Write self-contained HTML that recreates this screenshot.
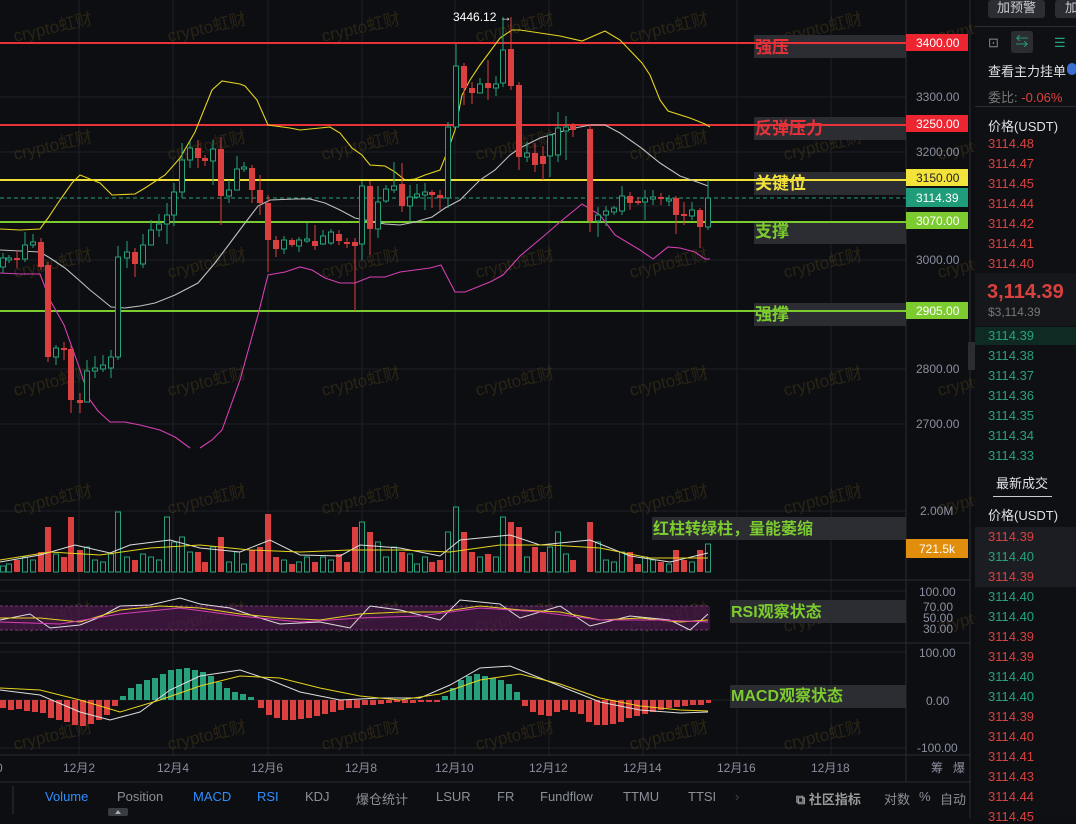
<!DOCTYPE html>
<html><head><meta charset="utf-8"><style>
*{margin:0;padding:0;box-sizing:border-box}
body{width:1076px;height:818px;background:#0d0e11;overflow:hidden;font-family:"Liberation Sans","Noto Sans CJK SC",sans-serif;position:relative;color:#c9ccd2}
.rp{position:absolute;left:975px;top:0;width:101px;height:818px;background:#0f1013}
.rp div{position:absolute;left:13px;font-size:13px;white-space:nowrap}
.r{color:#d9413f}.g{color:#26a17b}
.tb{position:absolute;top:789px;font-size:13px;color:#8a8f98}
.bl{color:#2e8fff}
</style></head><body>
<svg width="1076" height="818" style="position:absolute;left:0;top:0" font-family="Liberation Sans, Noto Sans CJK SC, sans-serif">
<g stroke="#1e2026" stroke-width="1">
<path d="M0,97H906M0,152H906M0,206H906M0,260H906M0,369H906M0,424H906M0,511H906M0,591H906M0,652H906M0,700H906M0,748H906"/>
<path d="M79,0V755M173,0V755M268,0V755M362,0V755M455,0V755M549,0V755M643,0V755M737,0V755M831,0V755"/>
</g>
<g stroke="#2a2c33"><path d="M0,580H970M0,643H970M0,755H970M0,782H970M906,0V782M970,0V818"/></g>
<g fill="#5a4a1c" fill-opacity="0.38" font-size="17">
<text transform="translate(15,42) rotate(-13)">crypto虹财</text><text transform="translate(169,42) rotate(-13)">crypto虹财</text><text transform="translate(323,42) rotate(-13)">crypto虹财</text><text transform="translate(477,42) rotate(-13)">crypto虹财</text><text transform="translate(631,42) rotate(-13)">crypto虹财</text><text transform="translate(785,42) rotate(-13)">crypto虹财</text><text transform="translate(939,42) rotate(-13)">crypto虹财</text>
<text transform="translate(15,160) rotate(-13)">crypto虹财</text><text transform="translate(169,160) rotate(-13)">crypto虹财</text><text transform="translate(323,160) rotate(-13)">crypto虹财</text><text transform="translate(477,160) rotate(-13)">crypto虹财</text><text transform="translate(631,160) rotate(-13)">crypto虹财</text><text transform="translate(785,160) rotate(-13)">crypto虹财</text><text transform="translate(939,160) rotate(-13)">crypto虹财</text>
<text transform="translate(15,278) rotate(-13)">crypto虹财</text><text transform="translate(169,278) rotate(-13)">crypto虹财</text><text transform="translate(323,278) rotate(-13)">crypto虹财</text><text transform="translate(477,278) rotate(-13)">crypto虹财</text><text transform="translate(631,278) rotate(-13)">crypto虹财</text><text transform="translate(785,278) rotate(-13)">crypto虹财</text><text transform="translate(939,278) rotate(-13)">crypto虹财</text>
<text transform="translate(15,396) rotate(-13)">crypto虹财</text><text transform="translate(169,396) rotate(-13)">crypto虹财</text><text transform="translate(323,396) rotate(-13)">crypto虹财</text><text transform="translate(477,396) rotate(-13)">crypto虹财</text><text transform="translate(631,396) rotate(-13)">crypto虹财</text><text transform="translate(785,396) rotate(-13)">crypto虹财</text><text transform="translate(939,396) rotate(-13)">crypto虹财</text>
<text transform="translate(15,514) rotate(-13)">crypto虹财</text><text transform="translate(169,514) rotate(-13)">crypto虹财</text><text transform="translate(323,514) rotate(-13)">crypto虹财</text><text transform="translate(477,514) rotate(-13)">crypto虹财</text><text transform="translate(631,514) rotate(-13)">crypto虹财</text><text transform="translate(785,514) rotate(-13)">crypto虹财</text><text transform="translate(939,514) rotate(-13)">crypto虹财</text>
<text transform="translate(15,632) rotate(-13)">crypto虹财</text><text transform="translate(169,632) rotate(-13)">crypto虹财</text><text transform="translate(323,632) rotate(-13)">crypto虹财</text><text transform="translate(477,632) rotate(-13)">crypto虹财</text><text transform="translate(631,632) rotate(-13)">crypto虹财</text><text transform="translate(785,632) rotate(-13)">crypto虹财</text><text transform="translate(939,632) rotate(-13)">crypto虹财</text>
<text transform="translate(15,750) rotate(-13)">crypto虹财</text><text transform="translate(169,750) rotate(-13)">crypto虹财</text><text transform="translate(323,750) rotate(-13)">crypto虹财</text><text transform="translate(477,750) rotate(-13)">crypto虹财</text><text transform="translate(631,750) rotate(-13)">crypto虹财</text><text transform="translate(785,750) rotate(-13)">crypto虹财</text>
</g>
<g fill="#2b2d33">
<rect x="754" y="35" width="152" height="23"/><rect x="754" y="117" width="152" height="23"/><rect x="754" y="172" width="152" height="23"/><rect x="754" y="221" width="152" height="23"/><rect x="754" y="303" width="152" height="23"/>
<rect x="652" y="517" width="254" height="23"/><rect x="730" y="600" width="176" height="23"/><rect x="730" y="685" width="176" height="23"/>
</g>
<path d="M0,43H906M0,125H906" stroke="#e8323a" stroke-width="2"/>
<path d="M0,180H906" stroke="#f1e13a" stroke-width="2"/>
<path d="M0,222H906M0,311H906" stroke="#7ccb2f" stroke-width="2"/>
<path d="M0,198H906" stroke="#26a17b" stroke-dasharray="4,3"/>
<g fill="none" stroke-width="1.1">
<polyline stroke="#e6d31e" points="0,229 20,230 40,229 48,218 60,200 72,183 80,175 100,183 112,195 135,194 145,188 165,175 180,158 195,132 212,90 222,81 240,84 245,86 257,100 268,125 290,128 300,130 320,128 330,127 340,133 352,148 362,155 370,165 385,166 395,172 405,180 415,179 425,175 440,170 448,150 455,130 462,95 470,80 480,65 500,38 512,30 520,30 540,33 560,36 582,41 605,31 620,40 642,63 650,75 660,100 668,111 690,118 705,124 710,127"/>
<polyline stroke="#bfbfbf" points="0,250 20,251 40,252 50,258 65,268 80,281 90,290 100,298 111,307 125,308 140,306 155,303 175,295 198,283 215,263 230,243 245,223 258,206 270,200 295,199 310,199 325,203 340,210 355,218 370,221 385,224 400,225 415,222 432,217 445,208 460,200 470,190 480,180 495,170 510,155 520,148 540,138 560,132 575,128 590,125 605,125 620,133 640,147 660,163 680,176 700,183 708,186"/>
<polyline stroke="#d63fb4" points="0,273 20,274 40,274 50,300 64,325 78,364 90,400 98,411 110,422 125,422 140,425 160,430 175,437 190,448"/>
<polyline stroke="#d63fb4" points="200,448 212,440 222,430 240,380 258,315 268,275 285,272 300,267 312,270 325,278 340,283 355,283 370,277 385,277 400,272 415,270 430,268 441,265 455,292 465,292 490,282 503,275 520,256 545,235 560,222 582,204 600,215 615,235 640,250 653,259 668,247 680,248 695,252 705,259 710,259"/>
</g>
<g stroke="#dc3f3f" fill="#dc3f3f">
<path d="M17,250V268M41,238V270M48,262V362M64,342V360M71,345V413M80,393V413M135,248V277M198,140V168M205,155V166M221,137V225M252,165V203M260,175V215M268,195V272M276,236V257M292,238V247M315,225V250M339,230V245M347,238V248M355,238V311M370,181V255M402,163V212M432,190V208M440,190V210M464,63V105M472,82V104M488,60V100M511,17V90M519,82V170M535,143V172M543,146V180M573,123V137M590,124V232M630,192V210M638,197V205M661,193V205M676,196V234M684,202V225M700,208V248"/>
<g stroke="none">
<rect x="14" y="258" width="6" height="2"/><rect x="38" y="242" width="6" height="25"/><rect x="45" y="265" width="6" height="92"/><rect x="61" y="348" width="6" height="2"/><rect x="68" y="349" width="6" height="51"/><rect x="77" y="400" width="6" height="3"/><rect x="132" y="252" width="6" height="12"/><rect x="195" y="148" width="6" height="10"/><rect x="202" y="158" width="6" height="3"/><rect x="218" y="149" width="6" height="47"/><rect x="249" y="168" width="6" height="22"/><rect x="257" y="190" width="6" height="13"/><rect x="265" y="203" width="6" height="37"/><rect x="273" y="240" width="6" height="9"/><rect x="289" y="240" width="6" height="5"/><rect x="312" y="241" width="6" height="5"/><rect x="336" y="234" width="6" height="7"/><rect x="344" y="242" width="6" height="2"/><rect x="352" y="242" width="6" height="4"/><rect x="367" y="186" width="6" height="43"/><rect x="399" y="184" width="6" height="22"/><rect x="429" y="192" width="6" height="3"/><rect x="437" y="195" width="6" height="3"/><rect x="461" y="66" width="6" height="22"/><rect x="469" y="88" width="6" height="5"/><rect x="485" y="83" width="6" height="5"/><rect x="508" y="49" width="6" height="37"/><rect x="516" y="85" width="6" height="72"/><rect x="532" y="153" width="6" height="12"/><rect x="540" y="156" width="6" height="8"/><rect x="570" y="126" width="6" height="4"/><rect x="587" y="129" width="6" height="92"/><rect x="627" y="196" width="6" height="7"/><rect x="635" y="201" width="6" height="2"/><rect x="658" y="197" width="6" height="2"/><rect x="673" y="198" width="6" height="17"/><rect x="681" y="214" width="6" height="2"/><rect x="697" y="210" width="6" height="17"/>
</g></g>
<g stroke="#26a17b" fill="#0d0e11">
<path d="M3,253V273M9,255V263M25,232V262M33,234V248M56,345V365M87,360V402M95,356V378M103,355V372M111,350V378M118,246V360M127,241V268M143,234V268M151,220V245M159,214V237M167,203V244M174,183V226M182,143V198M190,141V168M213,140V185M229,180V203M237,156V190M244,162V172M284,236V254M299,237V252M307,223V243M323,230V245M331,229V245M362,181V260M378,186V238M386,185V203M394,162V193M410,185V222M417,184V199M425,183V210M448,122V208M456,44V127M480,78V93M496,76V96M503,17V87M527,142V162M550,134V177M558,112V162M566,116V160M598,207V237M606,206V226M614,206V215M622,186V215M645,190V220M653,190V205M669,195V206M692,202V220M708,180V230"/>
<rect x="0.5" y="258" width="5" height="9"/><rect x="6.5" y="258" width="5" height="2"/><rect x="22.5" y="245" width="5" height="14"/><rect x="30.5" y="242" width="5" height="3"/><rect x="53.5" y="348" width="5" height="9"/><rect x="84.5" y="371" width="5" height="31"/><rect x="92.5" y="368" width="5" height="3"/><rect x="100.5" y="365" width="5" height="4"/><rect x="108.5" y="357" width="5" height="11"/><rect x="115.5" y="257" width="5" height="100"/><rect x="124.5" y="252" width="5" height="6"/><rect x="140.5" y="245" width="5" height="19"/><rect x="148.5" y="230" width="5" height="15"/><rect x="156.5" y="224" width="5" height="6"/><rect x="164.5" y="215" width="5" height="9"/><rect x="171.5" y="192" width="5" height="23"/><rect x="179.5" y="160" width="5" height="32"/><rect x="187.5" y="148" width="5" height="12"/><rect x="210.5" y="149" width="5" height="12"/><rect x="226.5" y="190" width="5" height="6"/><rect x="234.5" y="169" width="5" height="21"/><rect x="241.5" y="167" width="5" height="2"/><rect x="281.5" y="240" width="5" height="9"/><rect x="296.5" y="240" width="5" height="6"/><rect x="304.5" y="239" width="5" height="2"/><rect x="320.5" y="236" width="5" height="8"/><rect x="328.5" y="232" width="5" height="11"/><rect x="359.5" y="186" width="5" height="58"/><rect x="375.5" y="202" width="5" height="27"/><rect x="383.5" y="189" width="5" height="12"/><rect x="391.5" y="186" width="5" height="4"/><rect x="407.5" y="197" width="5" height="9"/><rect x="414.5" y="194" width="5" height="3"/><rect x="422.5" y="192" width="5" height="3"/><rect x="445.5" y="127" width="5" height="71"/><rect x="453.5" y="66" width="5" height="61"/><rect x="477.5" y="84" width="5" height="9"/><rect x="493.5" y="84" width="5" height="4"/><rect x="500.5" y="50" width="5" height="33"/><rect x="524.5" y="153" width="5" height="4"/><rect x="547.5" y="135" width="5" height="21"/><rect x="555.5" y="128" width="5" height="27"/><rect x="563.5" y="127" width="5" height="4"/><rect x="595.5" y="215" width="5" height="6"/><rect x="603.5" y="211" width="5" height="4"/><rect x="611.5" y="208" width="5" height="4"/><rect x="619.5" y="196" width="5" height="15"/><rect x="642.5" y="198" width="5" height="4"/><rect x="650.5" y="197" width="5" height="2"/><rect x="666.5" y="199" width="5" height="2"/><rect x="689.5" y="210" width="5" height="6"/><rect x="705.5" y="198" width="5" height="29"/>
</g>
<text x="453" y="21" fill="#fff" font-size="12">3446.12 →</text>
<g font-size="17" font-weight="bold">
<text x="755" y="53" fill="#e8323a">强压</text><text x="755" y="134" fill="#e8323a">反弹压力</text><text x="755" y="189" fill="#f1e13a">关键位</text><text x="755" y="237" fill="#7ccb2f">支撑</text><text x="755" y="320" fill="#7ccb2f">强撑</text>
<text x="653" y="534" fill="#7ccb2f" font-size="16">红柱转绿柱，量能萎缩</text><text x="731" y="617" fill="#7ccb2f" font-size="16">RSI观察状态</text><text x="731" y="701" fill="#7ccb2f" font-size="16">MACD观察状态</text>
</g>
<rect x="906" y="34" width="62" height="17" fill="#ec2531"/><rect x="906" y="115" width="62" height="17" fill="#ec2531"/><rect x="906" y="169" width="62" height="17" fill="#f4e33a"/><rect x="906" y="188" width="62" height="19" fill="#1f9c7a"/><rect x="906" y="212" width="62" height="17" fill="#7ccb2f"/><rect x="906" y="302" width="62" height="17" fill="#7ccb2f"/><rect x="906" y="539" width="62" height="19" fill="#e18e0c"/>
<g font-size="12" fill="#8a90a0">
<text x="916" y="101">3300.00</text><text x="916" y="156">3200.00</text><text x="916" y="264">3000.00</text><text x="916" y="373">2800.00</text><text x="916" y="428">2700.00</text><text x="920" y="515">2.00M</text>
<text x="919" y="596">100.00</text><text x="923" y="611">70.00</text><text x="923" y="622">50.00</text><text x="923" y="633">30.00</text><text x="919" y="657">100.00</text><text x="926" y="705">0.00</text><text x="917" y="752">-100.00</text>
</g>
<g font-size="12" fill="#fff"><text x="916" y="47">3400.00</text><text x="916" y="128">3250.00</text><text x="916" y="182" fill="#222">3150.00</text><text x="916" y="202">3114.39</text><text x="916" y="225">3070.00</text><text x="916" y="315">2905.00</text><text x="919" y="553">721.5k</text></g>
<rect x="968" y="342" width="7" height="28" fill="#2b2d33"/>
<g fill="#dc3f3f"><rect x="14" y="560" width="6" height="12"/><rect x="38" y="552" width="6" height="20"/><rect x="45" y="527" width="6" height="45"/><rect x="61" y="557" width="6" height="15"/><rect x="68" y="517" width="6" height="55"/><rect x="77" y="550" width="6" height="22"/><rect x="132" y="560" width="6" height="12"/><rect x="195" y="552" width="6" height="20"/><rect x="202" y="562" width="6" height="10"/><rect x="218" y="537" width="6" height="35"/><rect x="249" y="550" width="6" height="22"/><rect x="257" y="547" width="6" height="25"/><rect x="265" y="514" width="6" height="58"/><rect x="273" y="557" width="6" height="15"/><rect x="289" y="564" width="6" height="8"/><rect x="312" y="562" width="6" height="10"/><rect x="336" y="554" width="6" height="18"/><rect x="344" y="562" width="6" height="10"/><rect x="352" y="527" width="6" height="45"/><rect x="367" y="532" width="6" height="40"/><rect x="399" y="552" width="6" height="20"/><rect x="429" y="562" width="6" height="10"/><rect x="437" y="560" width="6" height="12"/><rect x="461" y="532" width="6" height="40"/><rect x="469" y="552" width="6" height="20"/><rect x="485" y="554" width="6" height="18"/><rect x="508" y="522" width="6" height="50"/><rect x="516" y="527" width="6" height="45"/><rect x="532" y="547" width="6" height="25"/><rect x="540" y="552" width="6" height="20"/><rect x="570" y="560" width="6" height="12"/><rect x="587" y="522" width="6" height="50"/><rect x="627" y="552" width="6" height="20"/><rect x="635" y="564" width="6" height="8"/><rect x="658" y="562" width="6" height="10"/><rect x="673" y="550" width="6" height="22"/><rect x="681" y="560" width="6" height="12"/><rect x="697" y="550" width="6" height="22"/></g>
<g stroke="#26a17b" fill="none"><rect x="0.5" y="566" width="5" height="6"/><rect x="6.5" y="564" width="5" height="8"/><rect x="22.5" y="557" width="5" height="15"/><rect x="30.5" y="560" width="5" height="12"/><rect x="53.5" y="554" width="5" height="18"/><rect x="84.5" y="547" width="5" height="25"/><rect x="92.5" y="560" width="5" height="12"/><rect x="100.5" y="562" width="5" height="10"/><rect x="108.5" y="554" width="5" height="18"/><rect x="115.5" y="512" width="5" height="60"/><rect x="124.5" y="557" width="5" height="15"/><rect x="140.5" y="554" width="5" height="18"/><rect x="148.5" y="557" width="5" height="15"/><rect x="156.5" y="560" width="5" height="12"/><rect x="164.5" y="517" width="5" height="55"/><rect x="171.5" y="542" width="5" height="30"/><rect x="179.5" y="537" width="5" height="35"/><rect x="187.5" y="552" width="5" height="20"/><rect x="210.5" y="547" width="5" height="25"/><rect x="226.5" y="562" width="5" height="10"/><rect x="234.5" y="552" width="5" height="20"/><rect x="241.5" y="564" width="5" height="8"/><rect x="281.5" y="560" width="5" height="12"/><rect x="296.5" y="562" width="5" height="10"/><rect x="304.5" y="557" width="5" height="15"/><rect x="320.5" y="557" width="5" height="15"/><rect x="328.5" y="560" width="5" height="12"/><rect x="359.5" y="522" width="5" height="50"/><rect x="375.5" y="542" width="5" height="30"/><rect x="383.5" y="557" width="5" height="15"/><rect x="391.5" y="547" width="5" height="25"/><rect x="407.5" y="554" width="5" height="18"/><rect x="414.5" y="564" width="5" height="8"/><rect x="422.5" y="557" width="5" height="15"/><rect x="445.5" y="532" width="5" height="40"/><rect x="453.5" y="507" width="5" height="65"/><rect x="477.5" y="557" width="5" height="15"/><rect x="493.5" y="557" width="5" height="15"/><rect x="500.5" y="517" width="5" height="55"/><rect x="524.5" y="557" width="5" height="15"/><rect x="547.5" y="547" width="5" height="25"/><rect x="555.5" y="532" width="5" height="40"/><rect x="563.5" y="554" width="5" height="18"/><rect x="595.5" y="542" width="5" height="30"/><rect x="603.5" y="560" width="5" height="12"/><rect x="611.5" y="562" width="5" height="10"/><rect x="619.5" y="552" width="5" height="20"/><rect x="642.5" y="557" width="5" height="15"/><rect x="650.5" y="560" width="5" height="12"/><rect x="666.5" y="564" width="5" height="8"/><rect x="689.5" y="562" width="5" height="10"/><rect x="705.5" y="544" width="5" height="28"/></g>
<polyline fill="none" stroke="#ddd" stroke-width="1" points="0,562 40,555 75,545 110,553 130,545 170,540 200,548 240,552 270,540 300,555 340,556 360,545 400,548 440,556 460,540 510,535 540,545 590,540 630,556 670,562 708,553"/>
<polyline fill="none" stroke="#e6d31e" stroke-width="1" points="0,560 50,552 100,555 150,548 200,545 250,550 300,552 350,550 400,550 450,552 500,545 550,545 600,548 650,558 708,558"/>
<rect x="0" y="606" width="710" height="24" fill="#4a1a4a" fill-opacity="0.7"/>
<path d="M0,606H710M0,630H710" stroke="#7a3a7a" stroke-dasharray="3,2"/>
<polyline fill="none" stroke="#ddd" points="0,620 30,614 50,628 80,625 100,617 120,606 150,605 180,598 200,604 230,608 260,618 280,624 320,622 350,628 370,606 400,610 440,620 460,600 500,604 520,618 560,606 590,626 630,616 670,620 690,630 708,614"/>
<polyline fill="none" stroke="#e6d31e" points="0,618 40,618 80,622 120,610 160,606 200,608 240,614 280,618 320,620 360,614 400,612 440,612 480,606 520,610 560,612 600,620 640,618 680,622 708,620"/>
<polyline fill="none" stroke="#d63fb4" points="0,622 60,624 120,614 180,608 240,616 300,622 360,618 420,616 480,608 540,612 600,620 660,620 708,622"/>
<g fill="#dc3f3f"><rect x="0" y="700" width="6" height="8"/><rect x="8" y="700" width="6" height="10"/><rect x="16" y="700" width="6" height="9"/><rect x="24" y="700" width="6" height="11"/><rect x="32" y="700" width="6" height="12"/><rect x="40" y="700" width="6" height="13"/><rect x="48" y="700" width="6" height="18"/><rect x="56" y="700" width="6" height="20"/><rect x="64" y="700" width="6" height="22"/><rect x="72" y="700" width="6" height="25"/><rect x="80" y="700" width="6" height="26"/><rect x="88" y="700" width="6" height="24"/><rect x="96" y="700" width="6" height="20"/><rect x="104" y="700" width="6" height="15"/><rect x="112" y="700" width="6" height="6"/>
<rect x="258" y="700" width="6" height="8"/><rect x="266" y="700" width="6" height="15"/><rect x="274" y="700" width="6" height="18"/><rect x="282" y="700" width="6" height="20"/><rect x="290" y="700" width="6" height="20"/><rect x="298" y="700" width="6" height="19"/><rect x="306" y="700" width="6" height="18"/><rect x="314" y="700" width="6" height="16"/><rect x="322" y="700" width="6" height="14"/><rect x="330" y="700" width="6" height="12"/><rect x="338" y="700" width="6" height="10"/><rect x="346" y="700" width="6" height="8"/><rect x="354" y="700" width="6" height="8"/><rect x="362" y="700" width="6" height="5"/><rect x="370" y="700" width="6" height="5"/><rect x="378" y="700" width="6" height="4"/><rect x="386" y="700" width="6" height="3"/><rect x="394" y="700" width="6" height="2"/><rect x="402" y="700" width="6" height="3"/><rect x="410" y="700" width="6" height="3"/><rect x="418" y="700" width="6" height="2"/><rect x="426" y="700" width="6" height="2"/><rect x="434" y="700" width="6" height="2"/>
<rect x="522" y="700" width="6" height="6"/><rect x="530" y="700" width="6" height="12"/><rect x="538" y="700" width="6" height="15"/><rect x="546" y="700" width="6" height="16"/><rect x="554" y="700" width="6" height="12"/><rect x="562" y="700" width="6" height="10"/><rect x="570" y="700" width="6" height="12"/><rect x="578" y="700" width="6" height="14"/><rect x="586" y="700" width="6" height="22"/><rect x="594" y="700" width="6" height="25"/><rect x="602" y="700" width="6" height="25"/><rect x="610" y="700" width="6" height="24"/><rect x="618" y="700" width="6" height="22"/><rect x="626" y="700" width="6" height="18"/><rect x="634" y="700" width="6" height="16"/><rect x="642" y="700" width="6" height="14"/><rect x="650" y="700" width="6" height="12"/><rect x="658" y="700" width="6" height="10"/><rect x="666" y="700" width="6" height="8"/><rect x="674" y="700" width="6" height="7"/><rect x="682" y="700" width="6" height="6"/><rect x="690" y="700" width="6" height="5"/><rect x="698" y="700" width="6" height="5"/><rect x="706" y="700" width="5" height="3"/></g>
<g fill="#26a17b"><rect x="120" y="696" width="6" height="4"/><rect x="128" y="688" width="6" height="12"/><rect x="136" y="684" width="6" height="16"/><rect x="144" y="680" width="6" height="20"/><rect x="152" y="678" width="6" height="22"/><rect x="160" y="674" width="6" height="26"/><rect x="168" y="670" width="6" height="30"/><rect x="176" y="669" width="6" height="31"/><rect x="184" y="668" width="6" height="32"/><rect x="192" y="670" width="6" height="30"/><rect x="200" y="672" width="6" height="28"/><rect x="208" y="676" width="6" height="24"/><rect x="216" y="682" width="6" height="18"/><rect x="224" y="688" width="6" height="12"/><rect x="232" y="692" width="6" height="8"/><rect x="240" y="694" width="6" height="6"/><rect x="248" y="697" width="6" height="3"/>
<rect x="442" y="696" width="6" height="4"/><rect x="450" y="688" width="6" height="12"/><rect x="458" y="680" width="6" height="20"/><rect x="466" y="676" width="6" height="24"/><rect x="474" y="674" width="6" height="26"/><rect x="482" y="676" width="6" height="24"/><rect x="490" y="678" width="6" height="22"/><rect x="498" y="680" width="6" height="20"/><rect x="506" y="684" width="6" height="16"/><rect x="514" y="692" width="6" height="8"/></g>
<polyline fill="none" stroke="#ddd" points="0,690 40,695 80,712 110,720 140,712 170,690 200,676 240,670 270,680 300,692 340,700 380,698 420,698 450,685 480,668 510,666 540,678 570,690 600,702 640,710 680,713 708,712"/>
<polyline fill="none" stroke="#e6d31e" points="0,688 40,690 80,700 120,712 160,700 200,686 240,676 280,678 320,688 360,696 400,700 440,694 480,680 520,674 560,684 600,698 640,706 680,710 708,711"/>
<g font-size="12" fill="#8a90a0"><text x="-4" y="772">0</text><text x="63" y="772">12月2</text><text x="157" y="772">12月4</text><text x="251" y="772">12月6</text><text x="345" y="772">12月8</text><text x="435" y="772">12月10</text><text x="529" y="772">12月12</text><text x="623" y="772">12月14</text><text x="717" y="772">12月16</text><text x="811" y="772">12月18</text><text x="931" y="772">筹</text><text x="953" y="772">爆</text></g>
<path d="M13,786V814" stroke="#333"/>
<rect x="108" y="808" width="20" height="8" rx="2" fill="#3a3c43"/><path d="M115,814L118,810L121,814Z" fill="#aaa"/>
</svg>
<div class="tb bl" style="left:45px">Volume</div><div class="tb" style="left:117px">Position</div><div class="tb bl" style="left:193px">MACD</div><div class="tb bl" style="left:257px">RSI</div><div class="tb" style="left:305px">KDJ</div><div class="tb" style="left:356px">爆仓统计</div><div class="tb" style="left:436px">LSUR</div><div class="tb" style="left:497px">FR</div><div class="tb" style="left:540px">Fundflow</div><div class="tb" style="left:623px">TTMU</div><div class="tb" style="left:688px">TTSI</div><div class="tb" style="left:735px;color:#444">›</div>
<div class="tb" style="left:796px;color:#999"><b>⧉ 社区指标</b></div><div class="tb" style="left:884px">对数</div><div class="tb" style="left:919px">%</div><div class="tb" style="left:940px">自动</div>
<div class="rp">
<div style="left:13px;top:0;width:57px;height:18px;background:#2b2d33;border-radius:3px;color:#c9ccd2;text-align:center;line-height:16px">加预警</div>
<div style="left:80px;top:0;width:30px;height:18px;background:#2b2d33;border-radius:3px;color:#c9ccd2;padding-left:10px;line-height:16px">加</div>
<div style="left:0;top:26px;width:101px;height:1px;background:#2a2c33"></div>
<div style="left:13px;top:35px;color:#888">⊡</div>
<div style="left:36px;top:31px;width:22px;height:22px;background:#2b2d33;border-radius:3px;color:#26a17b;text-align:center;line-height:22px">⇆</div>
<div style="left:79px;top:35px;color:#26a17b">☰</div>
<div style="top:61px;font-size:13px;color:#dfe1e5">查看主力挂单</div><div style="left:92px;top:63px;width:10px;height:12px;background:#3a6fd0;border-radius:5px"></div>
<div style="top:87px;color:#777">委比: <span class="r">-0.06%</span></div>
<div style="left:0;top:106px;width:101px;height:1px;background:#2a2c33"></div>
<div style="top:116px;color:#dfe1e5">价格(USDT)</div>
<div class="r" style="top:136px">3114.48</div><div class="r" style="top:156px">3114.47</div><div class="r" style="top:176px">3114.45</div><div class="r" style="top:196px">3114.44</div><div class="r" style="top:216px">3114.42</div><div class="r" style="top:236px">3114.41</div><div class="r" style="top:256px">3114.40</div>
<div style="left:0;top:273px;width:101px;height:53px;background:#16171b"></div>
<div class="r" style="top:281px;font-size:20px;font-weight:bold;left:12px">3,114.39</div>
<div style="top:305px;font-size:12px;color:#777">$3,114.39</div>
<div style="left:0;top:327px;width:101px;height:18px;background:#0f2a22"></div>
<div class="g" style="top:328px">3114.39</div><div class="g" style="top:348px">3114.38</div><div class="g" style="top:368px">3114.37</div><div class="g" style="top:388px">3114.36</div><div class="g" style="top:408px">3114.35</div><div class="g" style="top:428px">3114.34</div><div class="g" style="top:448px">3114.33</div>
<div style="left:21px;top:473px;color:#dfe1e5">最新成交</div><div style="left:18px;top:496px;width:59px;height:1px;background:#ccc"></div>
<div style="top:505px;color:#dfe1e5">价格(USDT)</div>
<div style="left:0;top:527px;width:101px;height:60px;background:#1c1d22"></div>
<div class="r" style="top:529px">3114.39</div><div class="g" style="top:549px">3114.40</div><div class="r" style="top:569px">3114.39</div><div class="g" style="top:589px">3114.40</div><div class="g" style="top:609px">3114.40</div><div class="r" style="top:629px">3114.39</div><div class="r" style="top:649px">3114.39</div><div class="g" style="top:669px">3114.40</div><div class="g" style="top:689px">3114.40</div><div class="r" style="top:709px">3114.39</div><div class="r" style="top:729px">3114.40</div><div class="r" style="top:749px">3114.41</div><div class="r" style="top:769px">3114.43</div><div class="r" style="top:789px">3114.44</div><div class="r" style="top:809px">3114.45</div>
</div>
</body></html>
